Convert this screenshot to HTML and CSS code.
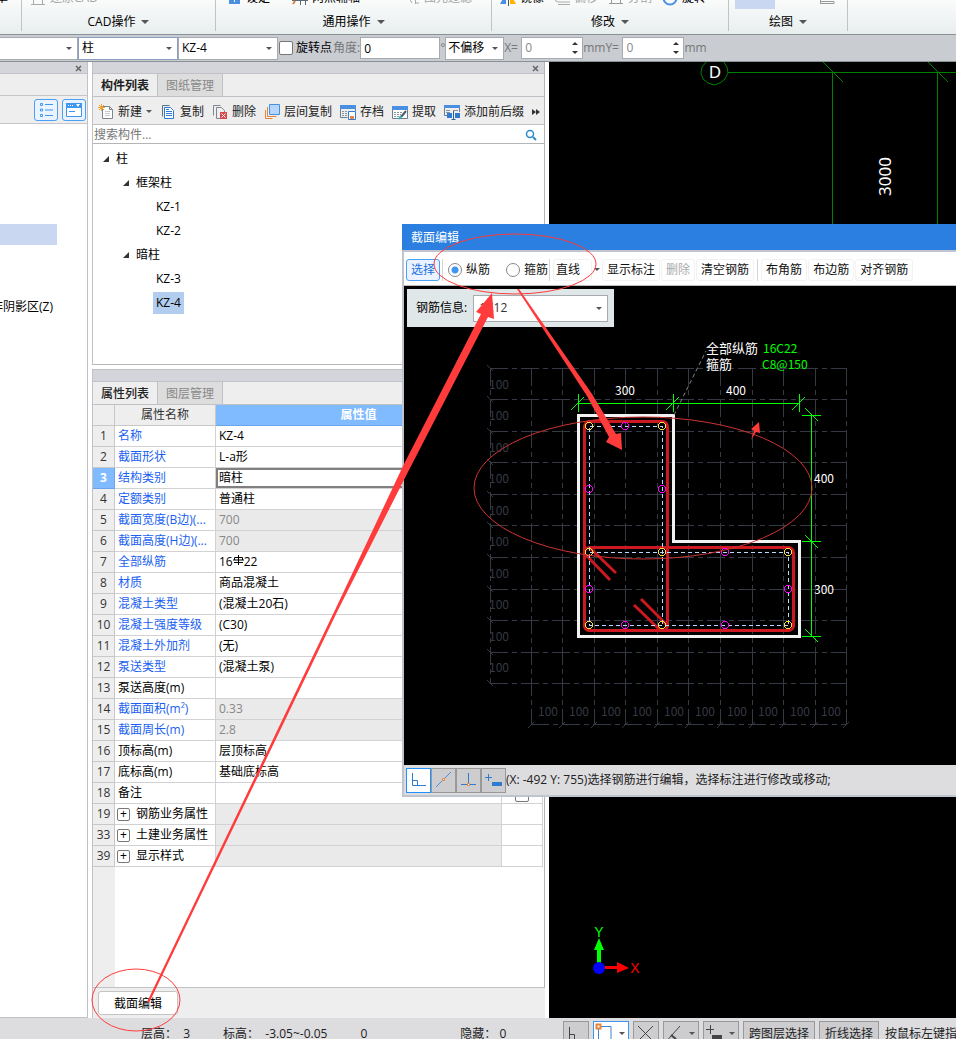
FILE: index.html
```html
<!DOCTYPE html>
<html lang="zh-CN">
<head>
    <meta charset="UTF-8">
    <meta name="viewport" content="width=device-width, initial-scale=1.0">
    <title>截面编辑</title>
    <link rel="stylesheet" href="styles.css">
</head>
<body>
    <div class="app">
        <!-- Ribbon -->
        <header class="ribbon">
            <div class="group group-first">
                <div class="tools"><button class="tool">单</button></div>
            </div>
            <div class="group">
                <div class="tools">
                    <button class="tool off"><svg width="16" height="16"><path d="M1 14.500h14M3.500 5v9M12.500 5v9M5 9.500h6" fill="none" stroke="#aaa"/></svg>还原CAD</button>
                </div>
                <button class="group-name">CAD操作<i class="down"></i></button>
            </div>
            <div class="group">
                <div class="tools tools-common">
                    <button class="tool"><svg width="16" height="16"><path d="M3 0h11v14H3z" fill="#4a8fe0"/><path d="M8.500 8v4" stroke="#fff"/></svg>设定</button>
                    <button class="tool"><svg width="16" height="16"><path d="M1 14l4-6M0 10.500h16M8.500 5v10M13.500 5v10" fill="none" stroke="#5c6b78"/><path d="M1 14l2-3" stroke="#e8833a" stroke-width="2"/></svg>两点辅轴</button>
                    <button class="tool off"><svg width="16" height="16"><path d="M4 6l4 7M11.500 6v8M11 9h4M11 13h4" fill="none" stroke="#aaa"/></svg>图元过滤</button>
                </div>
                <button class="group-name">通用操作<i class="down"></i></button>
            </div>
            <div class="group">
                <div class="tools tools-modify">
                    <button class="tool"><svg width="16" height="16"><path d="M6 3v11H0z" fill="#4a90e2"/><path d="M10 3v11h6z" fill="#ffb400"/><path d="M8.500 0v16" stroke="#555"/></svg>镜像</button>
                    <button class="tool off"><svg width="16" height="16"><path d="M1 8q0 4 3 4h12M4 14.500h12" fill="none" stroke="#aaa"/></svg>偏移</button>
                    <button class="tool off"><svg width="16" height="16"><path d="M3.500 4v9M12.500 4v9M1 13.500h14" fill="none" stroke="#999"/></svg>分割</button>
                    <button class="tool"><svg width="16" height="16"><circle cx="8" cy="8" r="6.500" fill="none" stroke="#4a90e2" stroke-width="2"/></svg>旋转</button>
                </div>
                <button class="group-name">修改<i class="down"></i></button>
            </div>
            <div class="group">
                <div class="tools tools-draw">
                    <span class="picked"></span>
                    <svg width="16" height="16"><path d="M1.500 8v6M2 11.500h13v2H2" fill="none" stroke="#999"/></svg>
                </div>
                <button class="group-name">绘图<i class="down"></i></button>
            </div>
        </header>

        <!-- Option bar -->
        <div class="options">
            <span class="select w-floor"><select aria-label="楼层"><option></option></select></span>
            <span class="select w-type focus"><select aria-label="构件类型"><option>柱</option></select></span>
            <span class="select w-type"><select aria-label="构件"><option>KZ-4</option></select></span>
            <input class="check" type="checkbox" id="rotate">
            <label for="rotate">旋转点</label>
            <label class="dim" for="angle">角度:</label>
            <input class="field w-angle" id="angle" type="text" value="0">
            <span class="dim degree">°</span>
            <span class="select w-offset"><select aria-label="偏移方式"><option>不偏移</option></select></span>
            <label class="dim axis" for="off-x">X=</label>
            <span class="spin"><input id="off-x" type="text" value="0"><span class="steps"><button class="up" aria-label="X+"></button><button class="dn" aria-label="X-"></button></span></span>
            <span class="dim">mm</span>
            <label class="dim axis" for="off-y">Y=</label>
            <span class="spin"><input id="off-y" type="text" value="0"><span class="steps"><button class="up" aria-label="Y+"></button><button class="dn" aria-label="Y-"></button></span></span>
            <span class="dim">mm</span>
        </div>

        <main class="workspace">
            <!-- Navigation -->
            <aside class="nav">
                <div class="panel-head"><button class="close" aria-label="关闭"><svg width="7" height="7"><path d="M1 1l5 5M6 1l-5 5" stroke="#666" stroke-width="1.500"/></svg></button></div>
                <div class="nav-band"></div>
                <div class="nav-tools">
                    <button aria-label="列表"><svg width="16" height="16" fill="none" stroke="#3d97f0"><path d="M2.500 1.500h2v2h-2zM2.500 7h2v2h-2zM2.500 12.500h2v2h-2zM7 2.500h8M7 8h8M7 13.500h8"/></svg></button>
                    <button aria-label="窗口"><svg width="16" height="16"><path d="M.5 1.500h15v13H.5z" fill="#fff" stroke="#3d97f0"/><path d="M0 1h16v5H0z" fill="#3d97f0"/><path d="M2 3.500h6" stroke="#fff" stroke-dasharray="1 1"/><path d="M10 2h4l-2 3z" fill="#fff"/><path d="M3 9.500h6" stroke="#3d97f0"/></svg></button>
                </div>
                <div class="nav-body">
                    <div class="nav-picked"></div>
                    <a class="nav-item" href="#"><span>非阴影区(Z)</span></a>
                </div>
            </aside>

            <section class="side">
                <!-- Component list -->
                <div class="panel list-panel">
                    <div class="panel-head"><button class="close" aria-label="关闭"><svg width="7" height="7"><path d="M1 1l5 5M6 1l-5 5" stroke="#666" stroke-width="1.500"/></svg></button></div>
                    <div class="tabs"><button class="tab active">构件列表</button><button class="tab">图纸管理</button></div>
                    <div class="list-tools">
                        <button><svg width="16" height="16"><path d="M4.500 2.500h7l3 3v9h-10z" fill="#fff" stroke="#7c8790"/><path d="M11.500 2.500v3h3" fill="none" stroke="#7c8790"/><path d="M7 7.500h5M7 9.500h5M7 11.500h5" stroke="#c5c9cc"/><path d="M1 1l5 5M6 1l-5 5M3.500 0v7M0 3.500h7" stroke="#f0a030"/></svg>新建<i class="down small"></i></button>
                        <button><svg width="16" height="16"><path d="M2.500 12.500v-11h7" fill="none" stroke="#5c7288"/><path d="M4.500 3.500h6l3 3v8h-9z" fill="#fff" stroke="#2f7bd0"/><path d="M6 7.500h6M6 9.500h6M6 11.500h6M6 5.500h3" stroke="#2f7bd0"/></svg>复制</button>
                        <button><svg width="16" height="16"><path d="M1.500 11.500v-10h7M4.500 14.500v-11h5l3 3v2" fill="none" stroke="#7c8790"/><path d="M4.500 14.500h4" stroke="#7c8790"/><path d="M8 8h7v7H8z" fill="#d9494b"/><path d="M9.500 9.500l4 4M13.500 9.500l-4 4" stroke="#fff"/></svg>删除</button>
                        <button><svg width="16" height="16"><path d="M5.500.5h10v10h-10z" fill="#b5d5fb" stroke="#4a8fe0"/><path d="M3.500 3v9.500h9M1.500 6v8.500h7" fill="none" stroke="#e8833a"/></svg>层间复制</button>
                        <button><svg width="16" height="16"><path d="M.5 1v12.500h7M15.500 1v6" fill="none" stroke="#6a7d8c"/><path d="M0 1h16v4H0z" fill="#4a8fe0"/><path d="M2 7.500h6M2 9.500h5M2 11.500h5" stroke="#8794a0" stroke-dasharray="2 1"/><path d="M8.500 7.500h7v8h-7z" fill="#fff" stroke="#2f7bd0"/><path d="M10 12h4v3h-4z" fill="#e8833a"/></svg>存档</button>
                        <button><svg width="16" height="16"><path d="M.5 3v11.500h15V3" fill="#fff" stroke="#6a7d8c"/><path d="M0 2h16v4H0z" fill="#4a8fe0"/><path d="M2 8.500h8M2 10.500h7M2 12.500h7" stroke="#8794a0" stroke-dasharray="2 1"/><path d="M14 7l-5 6" stroke="#4c5862" stroke-width="2"/><path d="M9 12l-2 3" stroke="#26b3b8" stroke-width="2"/></svg>提取</button>
                        <button><svg width="16" height="16"><path d="M.5 1v10.500h3M15.500 1v7" fill="none" stroke="#6a7d8c"/><path d="M0 1h16v3H0z" fill="#4a8fe0"/><path d="M2 6.500h4M2 8.500h4M9 6.500h5" stroke="#8794a0"/><path d="M3 9h5v5H3zM11 9h5v5h-5z" fill="#2f7bd0"/><path d="M9.500 7v8M7.500 15.500h4" stroke="#2f5f9a"/></svg>添加前后缀</button>
                        <button class="more" aria-label="更多"><svg width="8" height="6"><path d="M0 0l4 3-4 3zM4 0l4 3-4 3z" fill="#333"/></svg></button>
                    </div>
                    <div class="search">
                        <input type="search" placeholder="搜索构件..." aria-label="搜索构件">
                        <svg width="12" height="12"><circle cx="5" cy="5" r="3.500" fill="none" stroke="#2b8bd0" stroke-width="1.500"/><path d="M8 8l3 3" stroke="#2b8bd0" stroke-width="2"/></svg>
                    </div>
                    <ul class="tree">
                        <li class="lv1"><i class="open"></i><span>柱</span></li>
                        <li class="lv2"><i class="open"></i><span>框架柱</span></li>
                        <li class="lv3"><span>KZ-1</span></li>
                        <li class="lv3"><span>KZ-2</span></li>
                        <li class="lv2"><i class="open"></i><span>暗柱</span></li>
                        <li class="lv3"><span>KZ-3</span></li>
                        <li class="lv3 selected"><span>KZ-4</span></li>
                    </ul>
                </div>

                <!-- Property list -->
                <div class="panel prop-panel">
                    <div class="panel-head"></div>
                    <div class="tabs"><button class="tab active">属性列表</button><button class="tab">图层管理</button></div>
                    <div class="prop-body">
                        <table>
                            <colgroup><col class="c-no"><col class="c-name"><col><col class="c-add"></colgroup>
                            <thead>
                                <tr><th></th><th>属性名称</th><th class="current">属性值</th><th></th></tr>
                            </thead>
                            <tbody>
                                <tr><th>1</th><td class="key">名称</td><td>KZ-4</td><td></td></tr>
                                <tr><th>2</th><td class="key">截面形状</td><td>L-a形</td><td></td></tr>
                                <tr><th class="current">3</th><td class="key">结构类别</td><td class="editing">暗柱</td><td></td></tr>
                                <tr><th>4</th><td class="key">定额类别</td><td>普通柱</td><td></td></tr>
                                <tr><th>5</th><td class="key">截面宽度(B边)(...</td><td class="ro">700</td><td></td></tr>
                                <tr><th>6</th><td class="key">截面高度(H边)(...</td><td class="ro">700</td><td></td></tr>
                                <tr><th>7</th><td class="key">全部纵筋</td><td>16<svg class="rebar" width="11" height="10"><path d="M5.500 0v10M1 7.500h9M1.500 5V2.500h8V5M0 5h11" fill="none" stroke="#000"/></svg>22</td><td></td></tr>
                                <tr><th>8</th><td class="key">材质</td><td>商品混凝土</td><td></td></tr>
                                <tr><th>9</th><td class="key">混凝土类型</td><td>(混凝土20石)</td><td></td></tr>
                                <tr><th>10</th><td class="key">混凝土强度等级</td><td>(C30)</td><td></td></tr>
                                <tr><th>11</th><td class="key">混凝土外加剂</td><td>(无)</td><td></td></tr>
                                <tr><th>12</th><td class="key">泵送类型</td><td>(混凝土泵)</td><td></td></tr>
                                <tr><th>13</th><td>泵送高度(m)</td><td></td><td></td></tr>
                                <tr><th>14</th><td class="key">截面面积(m²)</td><td class="ro">0.33</td><td></td></tr>
                                <tr><th>15</th><td class="key">截面周长(m)</td><td class="ro">2.8</td><td></td></tr>
                                <tr><th>16</th><td>顶标高(m)</td><td>层顶标高</td><td></td></tr>
                                <tr><th>17</th><td>底标高(m)</td><td>基础底标高</td><td></td></tr>
                                <tr><th>18</th><td>备注</td><td></td><td class="add"><input class="check" type="checkbox" aria-label="附加"></td></tr>
                                <tr><th>19</th><td class="fold"><button>+</button>钢筋业务属性</td><td class="ro"></td><td></td></tr>
                                <tr><th>33</th><td class="fold"><button>+</button>土建业务属性</td><td class="ro"></td><td></td></tr>
                                <tr><th>39</th><td class="fold"><button>+</button>显示样式</td><td class="ro"></td><td></td></tr>
                            </tbody>
                        </table>
                    </div>
                    <div class="prop-foot"><button class="edit-section">截面编辑</button></div>
                </div>
            </section>

            <!-- Model view -->
            <section class="view">
                <svg width="100%" height="100%">
                    <g fill="none" stroke="#008000">
                        <path d="M179 10.500H1000M283.500 10V700M388.500 10V700"/>
                        <path d="M274 0l20 20M379 0l20 20"/>
                        <path d="M158 -1l8 -2 8 2 4 6 1 6-3 6-5 4-6 2-6-2-5-4-2-6 1-6z"/>
                    </g>
                    <text class="axis-name" x="166" y="16" text-anchor="middle">D</text>
                    <text class="axis-dim" transform="translate(342 134) rotate(-90)">3000</text>
                    <path d="M48 904V888h-3l5-12 5 12h-3v16z" fill="#0f0"/>
                    <path d="M52 904h16v-4l12 6-12 5v-4H52z" fill="#f00"/>
                    <circle cx="50" cy="906" r="6" fill="#00f"/>
                    <text class="ucs" x="50" y="875" fill="#0f0" text-anchor="middle">Y</text>
                    <text class="ucs" x="86" y="911" fill="#f00" text-anchor="middle">X</text>
                </svg>
            </section>
        </main>

        <!-- Status bar -->
        <footer class="status">
            <div class="readout">
                <span>层高：&nbsp; 3</span>
                <span>标高：&nbsp; -3.05~-0.05</span>
                <span>0</span>
                <span class="hidden-count">隐藏： 0</span>
            </div>
            <div class="snap">
                <button aria-label="正交"><svg width="22" height="20"><path d="M4.500 4v13h14M4.500 11.500h5v5" fill="none" stroke="#444"/></svg></button>
                <button class="on" aria-label="对象捕捉"><svg width="22" height="20"><path d="M5 3.500h11v14M3.500 6v12" fill="none" stroke="#3b86d8"/><path d="M1.500 1.500h4v4h-4z" fill="#fff" stroke="#e8833a" stroke-width="2"/></svg><i class="down small"></i></button>
                <button aria-label="交点"><svg width="22" height="20"><path d="M3 3l15 15M18 3L3 18" stroke="#444"/></svg></button>
                <button aria-label="垂点"><svg width="22" height="20"><path d="M15 3L3 16.500h15" fill="none" stroke="#444"/><path d="M6 12l5 4" stroke="#444" stroke-width="2"/></svg><i class="down small"></i></button>
                <button aria-label="偏移"><svg width="22" height="20"><path d="M1 6.500h8M5.500 2v9" stroke="#444"/><path d="M7 12h10v5H7z" fill="#444"/></svg><i class="down small"></i></button>
                <button class="word">跨图层选择</button>
                <button class="word">折线选择</button>
                <span class="hint">按鼠标左键指定第一个角点</span>
            </div>
        </footer>

        <!-- Section editor window -->
        <div class="dialog" role="dialog" aria-label="截面编辑">
            <div class="dialog-title">截面编辑</div>
            <div class="dialog-tools">
                <button class="on">选择</button>
                <span class="sep"></span>
                <input type="radio" name="bar" id="bar-main" checked><label for="bar-main">纵筋</label>
                <input type="radio" name="bar" id="bar-hoop"><label for="bar-hoop">箍筋</label>
                <span class="sep"></span>
                <button class="shape">直线</button><i class="down small"></i>
                <button>显示标注</button>
                <button disabled>删除</button>
                <button>清空钢筋</button>
                <span class="sep wide"></span>
                <button>布角筋</button>
                <button>布边筋</button>
                <button>对齐钢筋</button>
            </div>
            <div class="drawing">
                <div class="bar-info">
                    <label for="bar-spec">钢筋信息:</label>
                    <span class="select"><select id="bar-spec"><option>1C12</option></select></span>
                </div>
                <!-- one grid cell is 100 mm -->
                <svg class="section" width="450" height="430">
                    <g transform="translate(-404 -327)">
                        <g class="grid">
                            <path d="M490 368.500H847M490 399.500H847M490 431.500H847M490 462.500H847M490 494.500H847M490 525.500H847M490 557.500H847M490 589.500H847M490 620.500H847M490 652.500H847M490 683.500H847"/>
                            <path d="M531.500 368V724M562.500 368V724M594.500 368V724M625.500 368V724M657.500 368V724M688.500 368V724M720.500 368V724M752.500 368V724M783.500 368V724M815.500 368V724M846.500 368V724"/>
                            <path d="M490.500 368V684M531 724.500H847"/>
                            <path class="ticks" d="M487 365l6 6M487 396l6 6M487 428l6 6M487 459l6 6M487 491l6 6M487 522l6 6M487 554l6 6M487 586l6 6M487 617l6 6M487 649l6 6M487 680l6 6M528 728l6-6M559 728l6-6M591 728l6-6M622 728l6-6M654 728l6-6M685 728l6-6M717 728l6-6M749 728l6-6M780 728l6-6M812 728l6-6M843 728l6-6"/>
                        </g>
                        <g class="grid-text">
                            <text x="489" y="389">100</text><text x="489" y="420">100</text><text x="489" y="452">100</text><text x="489" y="483">100</text><text x="489" y="515">100</text>
                            <text x="489" y="546">100</text><text x="489" y="578">100</text><text x="489" y="609">100</text><text x="489" y="641">100</text><text x="489" y="672">100</text>
                            <text x="538" y="716">100</text><text x="569" y="716">100</text><text x="601" y="716">100</text><text x="632" y="716">100</text><text x="664" y="716">100</text>
                            <text x="695" y="716">100</text><text x="727" y="716">100</text><text x="758" y="716">100</text><text x="790" y="716">100</text><text x="821" y="716">100</text>
                        </g>
                        <path d="M578.500 415.500h95v126h126v95h-221z" fill="none" stroke="#f2f2f2" stroke-width="3"/>
                        <g class="hoop">
                            <rect x="584.500" y="421.500" width="83" height="209" rx="5"/>
                            <rect x="584.500" y="547.500" width="209" height="83" rx="5"/>
                            <path d="M590 548l26 25M586 555l24 25M641 599l26 26M634 605l26 25"/>
                        </g>
                        <g class="cover">
                            <path d="M589.500 426.500h73v199h-73z"/>
                            <path d="M589.500 552.500h199v73h-199z"/>
                        </g>
                        <g class="long-bar">
                            <circle cx="589" cy="426" r="3.500"/><circle cx="662" cy="426" r="3.500"/><circle cx="589" cy="552" r="3.500"/><circle cx="662" cy="552" r="3.500"/>
                            <circle cx="788" cy="552" r="3.500"/><circle cx="589" cy="625" r="3.500"/><circle cx="662" cy="625" r="3.500"/><circle cx="788" cy="625" r="3.500"/>
                        </g>
                        <g class="side-bar">
                            <circle cx="625" cy="426" r="3.500"/><circle cx="589" cy="489" r="3.500"/><circle cx="662" cy="489" r="3.500"/><circle cx="589" cy="589" r="3.500"/>
                            <circle cx="625" cy="625" r="3.500"/><circle cx="725" cy="552" r="3.500"/><circle cx="788" cy="589" r="3.500"/><circle cx="725" cy="625" r="3.500"/>
                        </g>
                        <g class="dims">
                            <path d="M578 403.500h222M578.500 394v18M673.500 394v18M799.500 394v18M571 410l13-13M666 410l13-13M792 410l13-13"/>
                            <path d="M811.500 415v222M802 415.500h19M802 541.500h19M802 636.500h19M805 408l13 13M805 535l13 13M805 629l13 13"/>
                        </g>
                        <path d="M674 415l32-64" stroke="#888" stroke-dasharray="4 3"/>
                        <g class="dim-text">
                            <text x="615" y="395">300</text><text x="726" y="395">400</text>
                            <text x="814" y="483">400</text><text x="814" y="594">300</text>
                            <text class="cn" x="706" y="353">全部纵筋</text><text class="cn" x="706" y="369">箍筋</text>
                            <text class="spec" x="763" y="353">16C22</text><text class="spec" x="762" y="369">C8@150</text>
                        </g>
                    </g>
                </svg>
            </div>
            <div class="dialog-status">
                <button class="on" aria-label="正交"><svg width="20" height="20"><path d="M3.500 3v12.500H17M3.500 10.500h5v5" fill="none" stroke="#2f7bd0"/></svg></button>
                <button aria-label="中点"><svg width="20" height="20"><path d="M2 17L17 2" stroke="#4a8fe0"/><path d="M8.500 8.500h2v2h-2z" fill="#fff" stroke="#e8833a"/></svg></button>
                <button aria-label="垂点"><svg width="20" height="20"><path d="M9.500 3v12M2 14.500h15" stroke="#2f7bd0"/><path d="M8.500 13.500h2v2h-2z" fill="#fff" stroke="#e8833a"/></svg></button>
                <button aria-label="坐标"><svg width="20" height="20"><path d="M1 7.500h7M4.500 4v7" stroke="#2f7bd0"/><path d="M8 12h10v4H8z" fill="#2f7bd0"/></svg></button>
                <span>(X: -492 Y: 755)选择钢筋进行编辑，选择标注进行修改或移动;</span>
            </div>
        </div>

        <!-- Red guide marks -->
        <svg class="marks" width="100%" height="100%">
            <g fill="none" stroke="#ff3b3b">
                <ellipse cx="515" cy="264" rx="81" ry="30"/>
                <ellipse cx="643" cy="488" rx="169" ry="71" stroke="#cf3333"/>
                <ellipse cx="136" cy="1000" rx="44" ry="31"/>
            </g>
            <g fill="#ff3b3b">
                <path d="M147 1002L335 610 403 466 481 314 476 312 492 293 494 319 488 317 409 470 338 610 149 1003z"/>
                <path d="M517 289L587 396 609 437 606 442 622 450 621 433 616 434 592 394 519 289z"/>
                <path d="M759 422l-8 7 3 2-3 9 5-8 4 1z"/>
            </g>
        </svg>
    </div>
</body>
</html>
```
FILE: styles.css
```css
* {
    box-sizing: border-box;
}

body {
    margin: 0;
    font: 12px/16px "Open Sans", "Noto Sans CJK SC", sans-serif;
    color: #000;
    background: #fff;
}

button, input, select {
    font: inherit;
    color: inherit;
    margin: 0;
    padding: 0;
    border: 0;
    background: none;
    border-radius: 0;
}

button {
    white-space: nowrap;
}

svg {
    display: block;
    flex: none;
}

.app {
    position: relative;
    display: flex;
    flex-direction: column;
    height: 100vh;
    overflow: hidden;
}

.down {
    display: inline-block;
    flex: none;
    border: 4px solid transparent;
    border-top-color: #555;
    border-bottom: 0;
}

.down.small {
    border-width: 3px;
    border-bottom: 0;
}

/* Ribbon */
.ribbon {
    display: grid;
    grid-template-columns: 22px 194px 276px 237px 119px 1fr;
    height: 35px;
    flex: none;
    overflow: hidden;
    background: linear-gradient(#fafbfb, #e8eeee);
    border-bottom: 1px solid #8b9296;
}

.group {
    display: flex;
    flex-direction: column;
    justify-content: flex-end;
    gap: 7px;
    height: 31px;
    border-right: 1px solid #c0c4c6;
}

.group-first {
    padding-bottom: 25px;
    overflow: hidden;
}

.group-first .tools {
    padding-left: 0;
    justify-content: flex-start;
}

.group-first .tool {
    width: 8px;
    direction: rtl;
}

.tools {
    display: flex;
    height: 16px;
    flex: none;
    padding-left: 8px;
}

.tools-common {
    padding-left: 10px;
    gap: 22px;
}

.tools-common .off {
    margin-left: 22px;
}

.tools-modify {
    gap: 10px;
}

.tools-draw {
    padding-left: 6px;
    gap: 44px;
}

.picked {
    width: 40px;
    height: 19px;
    background: #c9d8f0;
}

.tool {
    display: flex;
    gap: 4px;
    line-height: 16px;
}

.off {
    color: #a5a5a5;
}

.group-name {
    display: flex;
    align-items: center;
    justify-content: center;
    gap: 6px;
    height: 18px;
    flex: none;
}

/* Option bar */
.options {
    display: flex;
    align-items: center;
    height: 27px;
    flex: none;
    background: #c9ccd1;
    border-bottom: 1px solid #8b9296;
    white-space: nowrap;
}

.select {
    display: grid;
    align-items: center;
    height: 23px;
    background: #fff;
    border: 1px solid #a7abb0;
}

.select.focus {
    border-color: #8b9dc0;
}

.select::after {
    content: "";
    grid-area: 1 / 1;
    justify-self: end;
    margin-right: 5px;
    border: 3px solid transparent;
    border-top-color: #555;
    border-bottom: 0;
    pointer-events: none;
}

.select select {
    grid-area: 1 / 1;
    width: 100%;
    height: 100%;
    padding-left: 3px;
    appearance: none;
}

.w-floor {
    width: 78px;
    border-left: 0;
}

.w-type {
    width: 100px;
    margin-right: 1px;
}

.w-type.focus {
    margin-right: 0;
}

.w-offset {
    width: 59px;
}

.options .w-offset select {
    padding-left: 2px;
}

.w-angle {
    width: 80px;
}

.check {
    width: 14px;
    height: 14px;
    flex: none;
    appearance: none;
    background: #fff;
    border: 1px solid #777;
    border-radius: 2px;
}

.options label[for="rotate"] {
    margin: 0 1px 0 3px;
}

.options .dim {
    color: #777;
}

.options .degree {
    width: 5px;
}

.options .axis {
    width: 17px;
}

.field, .spin {
    height: 22px;
    padding-left: 3px;
    background: #fff;
    border: 1px solid #a7abb0;
}

.spin {
    display: flex;
    width: 62px;
}

.spin input {
    flex: 1;
    min-width: 0;
    color: #888;
}

.steps {
    display: flex;
    flex-direction: column;
    justify-content: center;
    gap: 6px;
    margin-right: 4px;
}

.up, .dn {
    border: 3px solid transparent;
}

.up {
    border-bottom-color: #333;
    border-top: 0;
}

.dn {
    border-top-color: #333;
    border-bottom: 0;
}

/* Workspace */
.workspace {
    display: grid;
    grid-template-columns: 88px 453px 1fr;
    column-gap: 4px;
    flex: 1;
    min-height: 0;
}

.panel-head {
    display: flex;
    align-items: center;
    justify-content: flex-end;
    height: 12px;
    flex: none;
    padding-right: 5px;
    background: #d4d5da;
    border-bottom: 1px solid #c0c2c8;
}

.close {
    padding: 1px 0 0;
}

.nav {
    display: flex;
    flex-direction: column;
    border-right: 1px solid #c0c2c8;
    border-bottom: 1px solid #c0c2c8;
}

.nav-band {
    height: 22px;
    background: #eee;
    border-bottom: 1px solid #c5c5ca;
}

.nav-tools {
    display: flex;
    align-items: center;
    justify-content: flex-end;
    gap: 4px;
    height: 28px;
    padding-right: 1px;
    background: #eee;
    border-bottom: 1px solid #c5c5ca;
}

.nav-tools button {
    display: grid;
    place-items: center;
    width: 24px;
    height: 22px;
    background: #eaf3ff;
    border: 1px solid #4aa0f5;
    border-radius: 3px;
}

.nav-body {
    padding-top: 100px;
}

.nav-picked {
    width: 57px;
    height: 21px;
    background: #c9d8f0;
}

.nav-item {
    display: flex;
    justify-content: flex-end;
    width: 53px;
    margin-top: 54px;
    color: #000;
    text-decoration: none;
    white-space: nowrap;
}

.side {
    display: flex;
    flex-direction: column;
    gap: 4px;
    min-width: 0;
}

.panel {
    display: flex;
    flex-direction: column;
    border-left: 1px solid #c0c2c8;
}

.tabs {
    display: flex;
    height: 23px;
    flex: none;
    background: #eee;
    border-bottom: 1px solid #c0c2c8;
}

.tab {
    width: 65px;
    padding-top: 1px;
    background: #ddd;
    color: #888;
    border-right: 1px solid #c0c2c8;
}

.tab.active {
    background: #eee;
    color: #222;
    font-weight: bold;
}

.prop-panel .tab.active {
    font-weight: 500;
}

.list-panel {
    height: 303px;
    flex: none;
    border-right: 1px solid #b5b5b5;
    border-bottom: 1px solid #b5b5b5;
}

.list-tools {
    display: flex;
    align-items: center;
    gap: 8px;
    height: 28px;
    flex: none;
    padding: 2px 2px 0 5px;
    background: #eee;
    border-bottom: 1px solid #c0c2c8;
    color: #222;
}

.list-tools button {
    display: flex;
    align-items: center;
    gap: 4px;
}

.search {
    display: flex;
    align-items: center;
    height: 19px;
    flex: none;
    padding: 1px 7px 0 1px;
    border-bottom: 1px solid #b5b5b5;
}

.search input {
    flex: 1;
}

.search input::placeholder {
    color: #777;
}

.tree {
    list-style: none;
    margin: 0;
    padding: 3px 0;
}

.tree li {
    display: flex;
    align-items: center;
    height: 24px;
}

.tree span {
    padding: 2px 3px;
}

.lv1 {
    padding-left: 10px;
}

.lv2 {
    padding-left: 30px;
}

.lv3 {
    padding-left: 60px;
}

.selected span {
    padding: 3px;
    background: #b3cdef;
}

.open {
    margin-right: 4px;
    border: 3px solid #333;
    border-top-color: transparent;
    border-left-color: transparent;
}

/* Properties */
.prop-panel {
    flex: 1;
    min-height: 0;
    border-top: 1px solid #c0c2c8;
}

.prop-body {
    flex: 1;
    min-height: 0;
    padding-right: 1px;
    background: linear-gradient(90deg, #eee 22px, #fff 22px);
    border-right: 1px solid #b5b5b5;
    border-bottom: 1px solid #c0c2c8;
}

table {
    width: 100%;
    table-layout: fixed;
    border-collapse: separate;
    border-spacing: 0;
}

.c-no {
    width: 22px;
}

.c-name {
    width: 101px;
}

.c-add {
    width: 41px;
}

th, td {
    height: 21px;
    padding: 0 3px;
    font-weight: normal;
    line-height: 20px;
    text-align: left;
    white-space: nowrap;
    overflow: hidden;
    text-overflow: ellipsis;
    border-right: 1px solid #d2d2d2;
    border-bottom: 1px solid #d2d2d2;
    background: #fff;
}

th {
    padding: 0;
    color: #333;
    text-align: center;
    background: #eee;
    border-color: #c8c8c8;
}

th.current {
    color: #fff;
    font-weight: bold;
    background: #80bbff;
    border-color: #68a5ec;
}

.key {
    color: #1a5ff0;
}

.ro {
    color: #888;
    background: #eaeaea;
}

.editing {
    box-shadow: inset 0 0 0 2px #808080;
}

.rebar {
    display: inline-block;
    margin-bottom: 1px;
}

.add .check {
    display: block;
    margin: 3px auto 0;
}

.fold {
    padding-left: 2px;
}

.fold button {
    width: 13px;
    height: 13px;
    margin-right: 6px;
    line-height: 10px;
    border: 1px solid #777;
    border-radius: 2px;
}

.prop-foot {
    height: 30px;
    flex: none;
    padding: 3px 5px;
    background: #eee;
}

.edit-section {
    width: 80px;
    height: 24px;
    padding-top: 1px;
    background: #fff;
    border: 1px solid #c4c4c4;
    border-radius: 3px;
}

/* Model view */
.view {
    min-width: 0;
    background: #000;
    overflow: hidden;
}

.axis-name, .axis-dim {
    fill: #fff;
    font: 17px "Noto Sans", sans-serif;
}

.ucs {
    font: 14px "Liberation Sans", sans-serif;
}

/* Status bar */
.status {
    display: grid;
    grid-template-columns: 563px 1fr;
    height: 21px;
    flex: none;
    padding-top: 3px;
    background: #dddde0;
    color: #222;
    overflow: hidden;
    white-space: nowrap;
}

.readout, .snap {
    display: flex;
    height: 24px;
    line-height: 26px;
}

.readout {
    gap: 33px;
    padding-left: 141px;
}

.hidden-count {
    margin-left: 60px;
}

.snap {
    gap: 4px;
}

.snap button {
    display: flex;
    align-items: center;
    gap: 2px;
    height: 24px;
    padding: 0 1px;
    background: #cdcdd0;
    border: 1px solid #999;
}

.snap button .down {
    margin-right: 2px;
}

.snap button.word {
    padding: 1px 5px 0;
}

.snap button.on {
    background: #fff;
    border-color: #3d97f0;
}

.hint {
    margin-left: 2px;
}

/* Section editor window */
.dialog {
    position: absolute;
    top: 224px;
    left: 402px;
    right: 0;
    display: flex;
    flex-direction: column;
    height: 573px;
    background: #fff;
    border: solid #bfc4ce;
    border-width: 0 0 2px 2px;
}

.dialog-title {
    height: 28px;
    flex: none;
    margin-left: -2px;
    padding-left: 9px;
    line-height: 27px;
    color: #fff;
    background: #2b7fe0;
    border-bottom: 2px solid #bfc4ce;
}

.dialog-tools {
    display: flex;
    align-items: center;
    height: 34px;
    flex: none;
    padding: 2px 0 0 2px;
    border-bottom: 1px solid #bbb;
    white-space: nowrap;
    color: #111;
}

.dialog-tools button {
    height: 22px;
    margin-right: 1px;
    padding: 0 4px;
    border: 1px solid #f2f2f2;
    border-radius: 3px;
}

.dialog-tools button:disabled {
    color: #aaa;
}

.dialog-tools button.on {
    color: #1a6fe0;
    background: #eaf3ff;
    border-color: #4aa0f5;
}

.dialog-tools button.shape {
    padding: 0 11px 0 2px;
}

.dialog-tools .down {
    margin: 0 2px 0 1px;
}

.dialog-tools input {
    width: 14px;
    height: 14px;
    margin: 0 4px 0 2px;
    appearance: none;
    border: 1px solid #888;
    border-radius: 50%;
}

.dialog-tools input:checked {
    background: radial-gradient(circle, #3d97f0 3px, #fff 4px);
}

.dialog-tools label + input {
    margin-left: 16px;
}

.sep {
    width: 1px;
    height: 22px;
    margin: 0 3px 0 1px;
    background: #d5d5d5;
}

.sep.wide {
    margin-left: 2px;
}

.drawing {
    flex: 1;
    min-height: 0;
    padding: 3px;
    background: #000;
    overflow: hidden;
}

.bar-info {
    display: flex;
    align-items: center;
    gap: 6px;
    width: 207px;
    height: 38px;
    padding: 0 6px 0 9px;
    background: #dfe7e9;
    white-space: nowrap;
}

.bar-info .select {
    flex: 1;
    height: 27px;
    color: #333;
}

.bar-info select {
    padding-left: 5px;
}

.section {
    margin-left: -3px;
}

.grid path {
    fill: none;
    stroke: #343943;
    stroke-dasharray: 18 4 5 4;
    shape-rendering: crispEdges;
}

.grid .ticks {
    stroke-dasharray: none;
}

.grid-text, .dim-text {
    font: 12px "Noto Sans CJK SC", sans-serif;
    fill: #343943;
}

.dim-text {
    fill: #fff;
}

.dim-text .cn {
    font-size: 13px;
}

.dim-text .spec {
    fill: #0f0;
}

.cover path {
    fill: none;
    stroke: #b8d8ff;
    stroke-dasharray: 4 3;
    shape-rendering: crispEdges;
}

.long-bar {
    fill: none;
    stroke: #ffe040;
    shape-rendering: crispEdges;
}

.side-bar {
    fill: none;
    stroke: #f0f;
    shape-rendering: crispEdges;
}

.hoop {
    fill: none;
    stroke: #cc1820;
    stroke-width: 3;
}

.dims {
    fill: none;
    stroke: #0f0;
    shape-rendering: crispEdges;
}

.dialog-status {
    display: flex;
    align-items: center;
    height: 30px;
    flex: none;
    padding-left: 2px;
    background: #dddde0;
    color: #222;
    white-space: nowrap;
    overflow: hidden;
}

.dialog-status button {
    display: grid;
    place-items: center;
    width: 25px;
    height: 25px;
    flex: none;
    background: #cdcdd0;
    border: 1px solid #999;
}

.dialog-status button.on {
    background: #fff;
    border-color: #1e90ff;
}

.marks {
    position: absolute;
    inset: 0;
    pointer-events: none;
}
```
